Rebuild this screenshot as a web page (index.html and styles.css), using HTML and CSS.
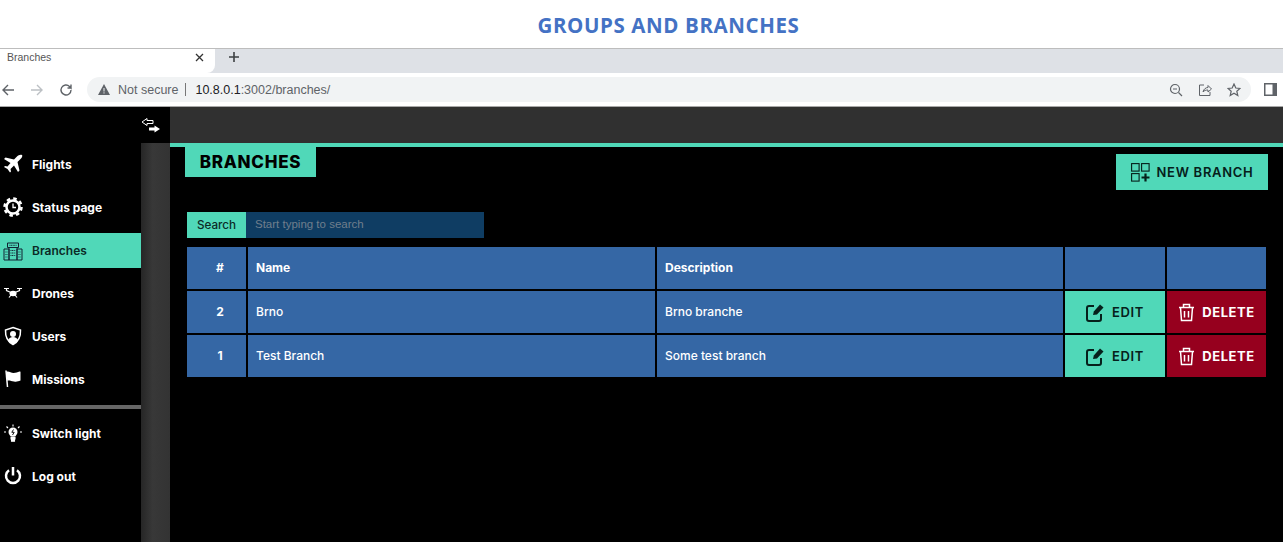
FILE: index.html
```html
<!DOCTYPE html>
<html lang="en">
<head>
<meta charset="utf-8">
<title>Groups and branches</title>
<link rel="stylesheet" href="styles.css">
</head>
<body>
<header class="doc-title">GROUPS AND BRANCHES</header>
<div class="tabstrip">
  <div class="tab"><span class="tab-name">Branches</span><svg width="9" height="9" viewBox="0 0 9 9"><path d="m1 1 7 7M8 1 1 8" stroke="#333" stroke-width="1.300"/></svg></div>
  <svg class="tab-new" width="12" height="12" viewBox="0 0 12 12"><path d="M6 1v10M1 6h10" stroke="#3c4043" stroke-width="1.600"/></svg>
</div>
<div class="toolbar">
  <svg class="nav-icon" width="14" height="14" viewBox="0 0 14 14"><path d="M13 7H2M7 2 2 7l5 5" fill="none" stroke="#5f6368" stroke-width="1.400"/></svg>
  <svg class="nav-icon" width="14" height="14" viewBox="0 0 14 14"><path d="M1 7h11M7 2l5 5-5 5" fill="none" stroke="#bcc0c4" stroke-width="1.400"/></svg>
  <svg class="nav-icon" width="14" height="14" viewBox="0 0 14 14"><path d="M12 7a5 5 0 1 1-1.500-3.600L12 5V1.500M12 5H8.500" fill="none" stroke="#5f6368" stroke-width="1.400"/></svg>
  <div class="omnibox">
    <svg width="12" height="11" viewBox="0 0 12 11"><path d="M6 0 12 11H0Z" fill="#5f6368"/><path d="M6 4v3.500M6 8.300v1.200" stroke="#f1f3f4" stroke-width="1"/></svg>
    <span class="secure">Not secure</span><span class="sep"></span>
    <span class="url">10.8.0.1<span class="url-dim">:3002/branches/</span></span>
    <span class="omni-icons">
      <svg width="14" height="14" viewBox="0 0 14 14"><circle cx="6" cy="6" r="4.500" fill="none" stroke="#5f6368" stroke-width="1.200"/><path d="M9.500 9.500 13 13M4 6h4" stroke="#5f6368" stroke-width="1.200"/></svg>
      <svg width="14" height="14" viewBox="0 0 14 14"><path d="M6 2H1.500v10.500H12V9M5 9c.5-3 3-4.500 5-4.500V2.500L13.500 6 10 9V7c-2 0-4 .5-5 2Z" fill="none" stroke="#5f6368" stroke-width="1"/></svg>
      <svg width="14" height="14" viewBox="0 0 14 14"><path d="m7 1 1.800 4 4.200.4-3.200 2.800 1 4.300L7 10.300 3.200 12.500l1-4.300L1 5.400 5.200 5Z" fill="none" stroke="#5f6368" stroke-width="1.200"/></svg>
    </span>
  </div>
  <svg class="panel-icon" width="13" height="13" viewBox="0 0 13 13"><rect width="13" height="13" fill="#5f6368"/><rect x="1.500" y="1.500" width="7" height="10" fill="#fff"/></svg>
</div>
<div class="app">
  <aside class="sidebar">
    <div class="toggle">
      <svg width="20" height="18" viewBox="0 0 20 18"><path d="M1 5 6 1.500V3.500H12V6.500H6V8.500Z" fill="#000" stroke="#fff" stroke-width="1"/><path d="M19 12 13.500 8.500V10.500H8V13.500H13.500V15.500Z" fill="#fff"/></svg>
    </div>
    <div class="side-body">
      <div class="side-menu">
        <nav class="nav">
          <a class="nav-item"><svg class="ico" width="20" height="20" viewBox="0 0 20 20"><path d="M19 1c-1.500-.8-3.500 0-5 1.500l-3 3L2.500 3.500 1 5l6.500 4L4.500 12.500 2 12l-1 1 3.500 2L7 18.500l1-1-.5-2.500L11 11.500l4 6.500 1.500-1.500-2-8.500 3-3C19 3.500 19.800 2 19 1Z" fill="#fff"/></svg>Flights</a>
          <a class="nav-item"><svg class="ico" width="20" height="20" viewBox="0 0 20 20"><circle cx="10" cy="10" r="6.500" fill="none" stroke="#fff" stroke-width="2.500"/><circle cx="10" cy="10" r="8.500" fill="none" stroke="#fff" stroke-width="2.500" stroke-dasharray="3.500 3.170"/><path d="M10 6.500V10.500H13" fill="none" stroke="#fff" stroke-width="1.300"/></svg>Status page</a>
          <a class="nav-item active"><svg class="ico" width="20" height="20" viewBox="0 0 20 20" fill="none" stroke="#123" stroke-width="1"><path d="M4.500 2h11v4.500h-11ZM1 8h5v11H1ZM14 8h5v11h-5ZM6 6.500h8V19H6Z"/><path d="M2.500 11h2M2.500 13.500h2M2.500 16h2M15.500 11h2M15.500 13.500h2M15.500 16h2M7.500 9.500h5M7.500 12h5M7.500 14.500h5M6.500 4.300h7" stroke-dasharray="1 .6"/></svg>Branches</a>
          <a class="nav-item"><svg class="ico" width="20" height="20" viewBox="0 0 20 20" fill="none" stroke="#fff" stroke-width="1.200"><path d="M1 5.500h5M14 5.500h5M3.500 5.500v2l4.500 2M16.500 5.500v2L12 9.500M8 12l-2 2.500M12 12l2 2.500"/><ellipse cx="10" cy="10.500" rx="3" ry="2.200" fill="#fff"/></svg>Drones</a>
          <a class="nav-item"><svg class="ico" width="20" height="20" viewBox="0 0 20 20"><path d="M10 1.500 17.500 4c.3 6.500-1.700 11.500-7.500 14.500C4.200 15.500 2.200 10.500 2.500 4Z" fill="none" stroke="#fff" stroke-width="1.500"/><circle cx="10" cy="8" r="3" fill="#fff"/><path d="M5 15c.5-3 2.500-4 5-4s4.500 1 5 4l-5 3.500Z" fill="#fff"/></svg>Users</a>
          <a class="nav-item"><svg class="ico" width="20" height="20" viewBox="0 0 20 20"><path d="M4.500 18 3 1.500" stroke="#fff" stroke-width="1.500"/><path d="M3.500 2.500c3-.5 4.500 1.500 7 1.500 2.500 0 4-1 6-1.500.5 0 1 0 1 .5v8.500c-2.500 1-4 1.500-6.500 1-3-.5-4.500-1.500-6.800-.8Z" fill="#fff"/></svg>Missions</a>
        </nav>
        <div class="nav-rule"></div>
        <nav class="nav">
          <a class="nav-item"><svg class="ico" width="20" height="20" viewBox="0 0 20 20"><circle cx="10" cy="9" r="4.500" fill="#fff"/><path d="M8 14h4v2H8ZM8.500 17h3v1.200h-3ZM10 1.500v2M3.500 3.500l1.500 1.500M16.500 3.500 15 5M1 9h2M17 9h2" stroke="#fff" stroke-width="1.100" fill="#fff"/><path d="M10.500 6.500 8.800 9.300h2.400L9.500 12" fill="none" stroke="#000" stroke-width=".9"/></svg>Switch light</a>
          <a class="nav-item"><svg class="ico" width="20" height="20" viewBox="0 0 20 20" fill="none" stroke="#fff" stroke-width="2.500"><path d="M10 1v8.500"/><path d="M6 4.200a7 7 0 1 0 8 0"/></svg>Log out</a>
        </nav>
      </div>
      <div class="gutter"></div>
    </div>
  </aside>
  <div class="content">
    <div class="topbar"></div>
    <main class="main">
      <div class="page-head">
        <h1 class="page-title">BRANCHES</h1>
        <button class="new-btn">
          <svg width="19" height="19" viewBox="0 0 19 19" fill="none" stroke="#06201b" stroke-width="1.100"><rect x=".6" y=".6" width="7.500" height="7.500"/><rect x="10.600" y=".6" width="7.500" height="7.500"/><rect x=".6" y="10.600" width="7.500" height="7.500"/><path d="M14.500 10.500v8M10.500 14.500h8" stroke-width="2.200"/></svg>
          NEW BRANCH
        </button>
      </div>
      <div class="search">
        <span class="search-label">Search</span>
        <span class="search-input">Start typing to search</span>
      </div>
      <div class="grid">
        <div class="cell center bold">#</div><div class="cell bold">Name</div><div class="cell bold">Description</div><div class="cell"></div><div class="cell"></div>

        <div class="cell center bold">2</div><div class="cell">Brno</div><div class="cell">Brno branche</div>
        <a class="action edit"><svg width="19" height="19" viewBox="0 0 19 19"><path d="M8 3H3a2 2 0 0 0-2 2v11a2 2 0 0 0 2 2h10a2 2 0 0 0 2-2v-5" fill="none" stroke="#06201b" stroke-width="2"/><path d="m7 12 .8-3.500L14 1.500l3.500 3L11 11.500Z" fill="#06201b"/></svg>EDIT</a>
        <a class="action del"><svg width="17" height="19" viewBox="0 0 17 19" fill="none" stroke="#fff" stroke-width="1.500"><path d="M1 4.500h15M5.500 4.500V1.500h6v3M2.500 4.500l1 13h10l1-13M6.500 8v6.500M10.500 8v6.500"/></svg>DELETE</a>

        <div class="cell center bold">1</div><div class="cell">Test Branch</div><div class="cell">Some test branch</div>
        <a class="action edit"><svg width="19" height="19" viewBox="0 0 19 19"><path d="M8 3H3a2 2 0 0 0-2 2v11a2 2 0 0 0 2 2h10a2 2 0 0 0 2-2v-5" fill="none" stroke="#06201b" stroke-width="2"/><path d="m7 12 .8-3.500L14 1.500l3.500 3L11 11.500Z" fill="#06201b"/></svg>EDIT</a>
        <a class="action del"><svg width="17" height="19" viewBox="0 0 17 19" fill="none" stroke="#fff" stroke-width="1.500"><path d="M1 4.500h15M5.500 4.500V1.500h6v3M2.500 4.500l1 13h10l1-13M6.500 8v6.500M10.500 8v6.500"/></svg>DELETE</a>
      </div>
    </main>
  </div>
</div>
</body>
</html>
```
FILE: styles.css
```css
* { box-sizing: border-box; }
html, body { margin: 0; height: 542px; overflow: hidden; background: #000; }
body { font-family: Inter, "Liberation Sans", sans-serif; display: flex; flex-direction: column; }

.doc-title {
  height: 48px; background: #fff; color: #4472c4;
  font-family: "Open Sans", sans-serif; font-weight: 700; font-size: 20.500px; letter-spacing: .6px;
  display: flex; align-items: center; justify-content: center;
  padding: 1px 0 0 54px; flex: none;
}
.tabstrip {
  height: 25px; flex: none; background: #dee1e6; border-top: 1px solid #bdbdbd;
  display: flex; align-items: flex-start; gap: 13px;
}
.tab {
  width: 215px; height: 24px; background: #fff; border-bottom-right-radius: 8px;
  display: flex; align-items: center; justify-content: space-between; padding: 0 11px 8px 7px;
}
.tab-name { font-family: "Liberation Sans", sans-serif; font-size: 10.500px; color: #555; }
.tab-new { margin-top: 2px; }
.toolbar {
  height: 34px; flex: none; background: #fff; border-bottom: 1px solid #a8a8a8;
  display: flex; align-items: center; padding: 0 6px 0 1px;
}
.nav-icon { margin-right: 15px; flex: none; }
.omnibox {
  width: 1164px; height: 25px; background: #f1f3f4; border-radius: 13px; margin-left: -1px;
  display: flex; align-items: center; padding: 0 10px 0 11px;
  font-family: "Liberation Sans", sans-serif; font-size: 12.500px;
}
.secure { color: #5f6368; margin-left: 8px; }
.sep { width: 1px; height: 13px; background: #777; margin: 0 9px 0 7px; }
.url { color: #202124; }
.url-dim { color: #5f6368; }
.omni-icons { margin-left: auto; display: flex; gap: 15px; align-items: center; }
.panel-icon { margin-left: 13px; flex: none; }

.app { flex: 1; display: flex; min-height: 0; background: #000; }
.sidebar { width: 170px; flex: none; background: #000; color: #fff; display: flex; flex-direction: column; }
.toggle { height: 36px; flex: none; display: flex; justify-content: flex-end; align-items: center; padding: 2px 9px 0 0; }
.side-body { flex: 1; display: flex; min-height: 0; }
.side-menu { width: 141px; flex: none; }
.nav { display: flex; flex-direction: column; gap: 7px; padding-top: 3px; }
.nav-item {
  height: 36px; display: flex; align-items: center; gap: 9px; padding: 0 0 0 2px;
  font-size: 12px; font-weight: 700; color: #fff;
}
.nav-item.active { height: 35px; margin-top: 1px; background: #50d8b8; color: #0b2a26; font-weight: 600; }
.ico { flex: none; margin-left: 1px; }
.nav-rule { height: 4px; background: #666; margin: 8px 0 6px; }
.nav-rule + .nav { padding-top: 0; }
.gutter { width: 29px; flex: none; background: linear-gradient(90deg, #262626, #383838 40%, #333); }
.content { flex: 1; display: flex; flex-direction: column; min-width: 0; }
.topbar { height: 36px; flex: none; background: #303030; }
.main { flex: 1; border-top: 4px solid #50d8b8; padding-left: 15px; background: #000; }
.page-head { display: flex; justify-content: space-between; align-items: flex-start; height: 65px; padding-right: 15px; }
.page-title {
  margin: 0; width: 131px; height: 30px; background: #50d8b8; color: #000;
  font-size: 17px; font-weight: 800; letter-spacing: .75px; display: flex; align-items: center; justify-content: center;
}
.new-btn {
  margin-top: 7px; width: 152px; height: 36px; border: 0; background: #50d8b8; color: #06201b;
  font-family: inherit; font-size: 13px; font-weight: 600; letter-spacing: .7px;
  display: flex; align-items: center; justify-content: center; gap: 7px;
}
.search { display: flex; height: 26px; margin-left: 2px; margin-bottom: 9px; font-size: 11.700px; }
.search-label { width: 59px; background: #50d8b8; color: #0b2a26; display: flex; align-items: center; justify-content: center; font-weight: 500; }
.search-input { width: 238px; background: #0f3d63; color: #6f7f8d; display: flex; align-items: center; padding: 0 0 2px 9px; font-family: "Liberation Sans", sans-serif; font-size: 11.500px; }
.grid {
  display: grid; margin-left: 2px; width: 1079px;
  grid-template-columns: 59px 407px 406px 100px 99px; grid-auto-rows: 42px; gap: 2px;
}
.cell { background: #3567a5; color: #fff; display: flex; align-items: center; padding: 0 0 2px 8px; font-size: 12px; font-weight: 500; }
.cell.bold { font-weight: 700; }
.cell.center { justify-content: center; padding-left: 7px; }
.action { display: flex; align-items: center; justify-content: center; gap: 7px; font-size: 13px; font-weight: 600; letter-spacing: .6px; }
.edit { background: #50d8b8; color: #06201b; }
.del { background: #96001e; color: #fff; font-weight: 700; }
```
